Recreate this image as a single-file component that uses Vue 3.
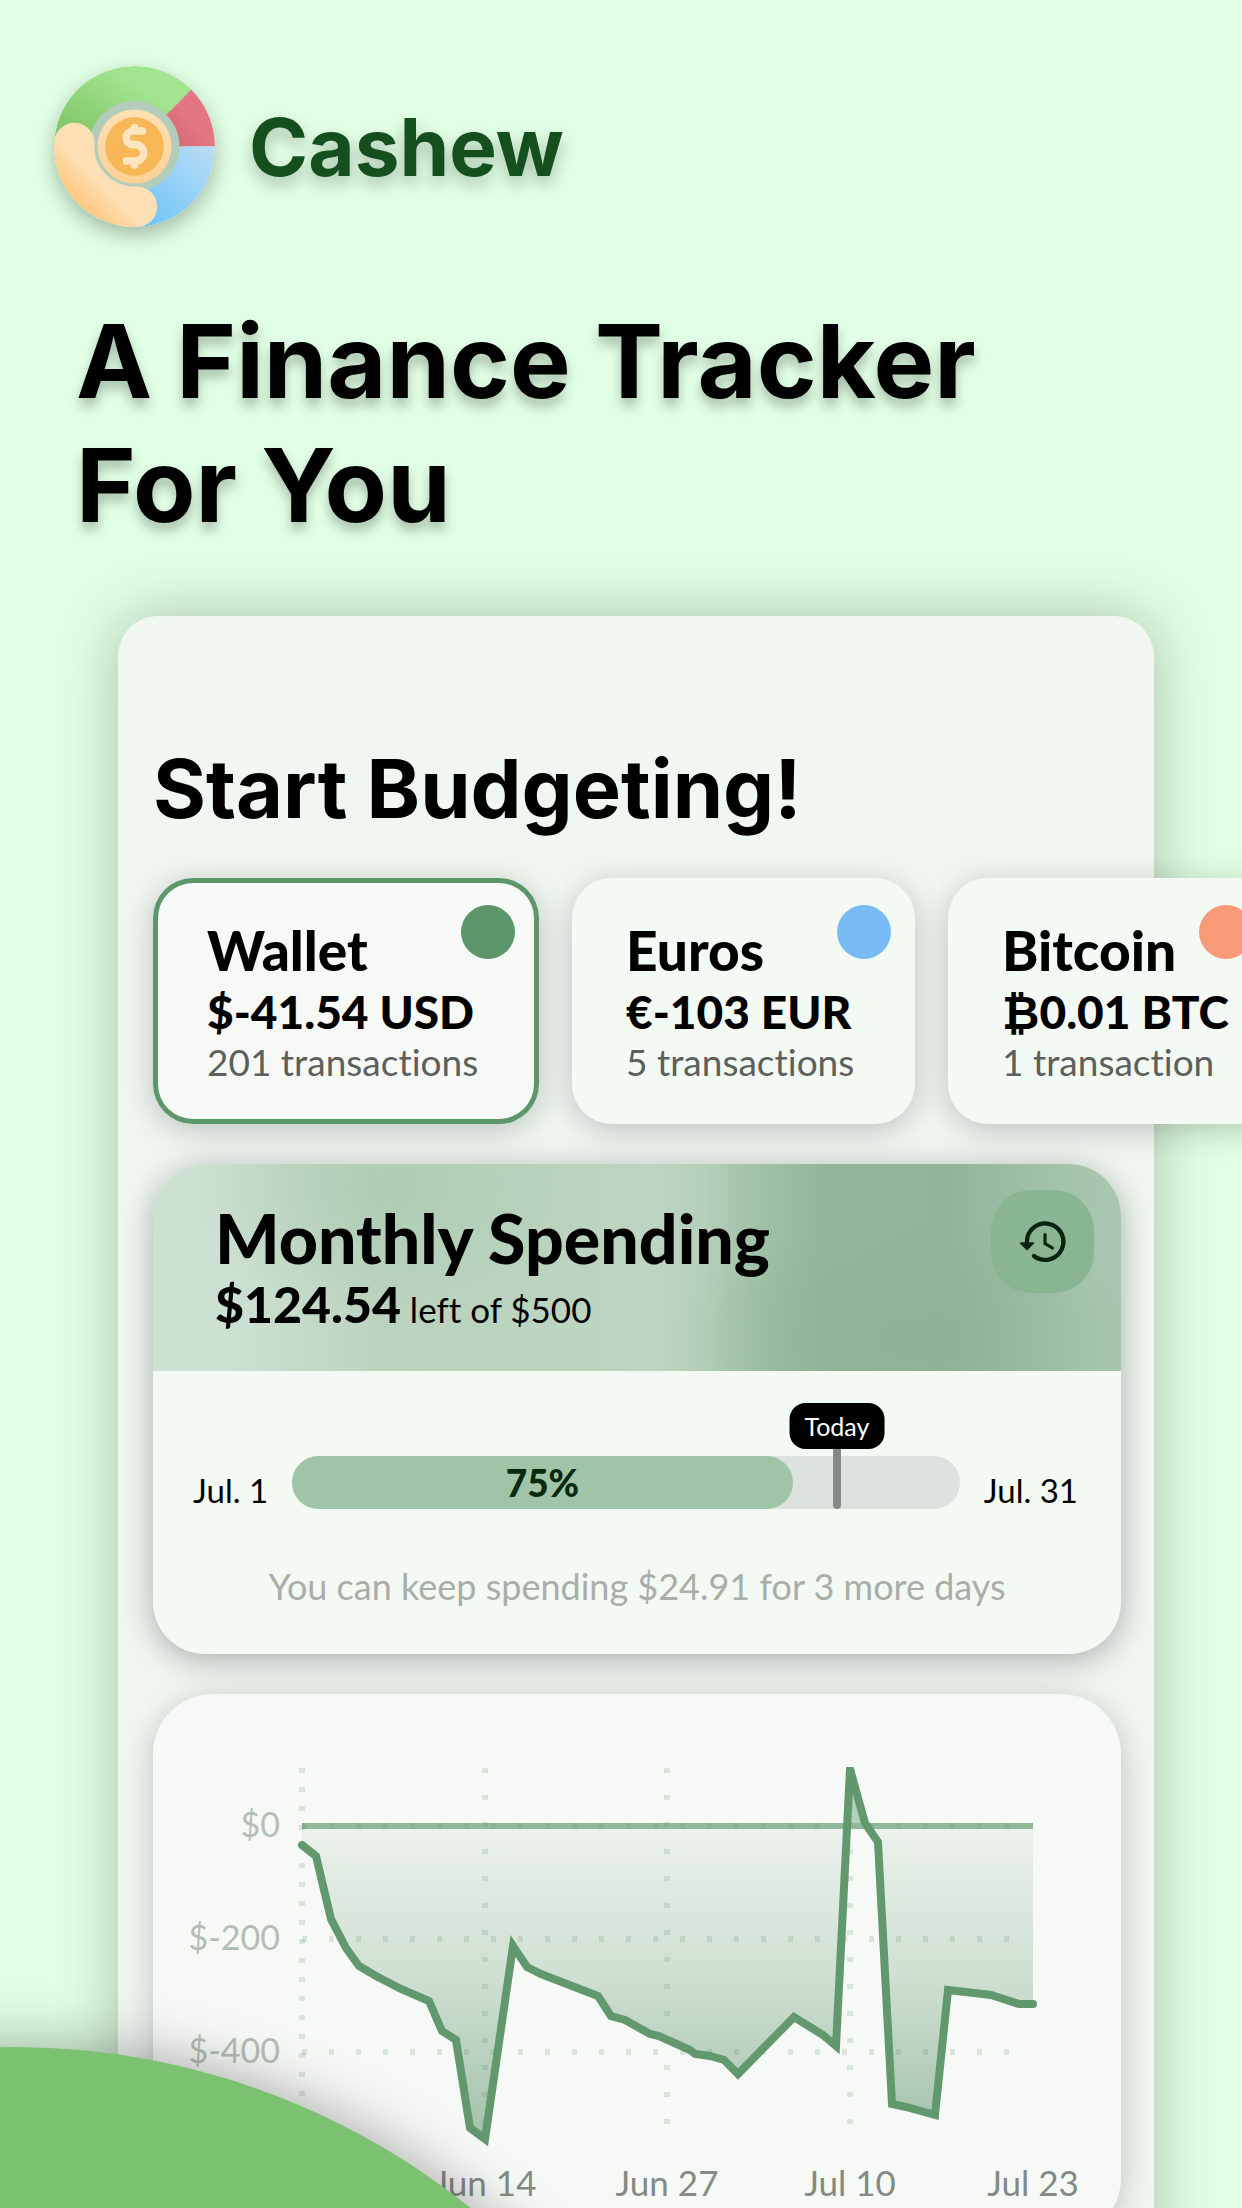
<script setup>
const wallets = [
  { name: 'Wallet', amount: '$-41.54 USD', count: '201 transactions', tone: 'green', active: true },
  { name: 'Euros', amount: '€-103 EUR', count: '5 transactions', tone: 'blue' },
  { name: 'Bitcoin', amount: '₿0.01 BTC', count: '1 transaction', tone: 'coral' }
]

const spentPercent = 75

const points = [
  [149, 151], [163, 162], [178, 225], [193, 254], [206, 272], [223, 282], [248, 295], [276, 307],
  [289, 337], [303, 346], [317, 434], [332, 445], [360, 252], [374, 273], [388, 280], [445, 302],
  [458, 322], [472, 326], [497, 340], [506, 342], [537, 356], [542, 360], [557, 362], [571, 366],
  [585, 380], [641, 323], [670, 341], [683, 352], [697, 75], [712, 129], [725, 148], [739, 410],
  [753, 413], [782, 421], [795, 296], [838, 301], [866, 310], [880, 310]
]
const line = points.map((p) => p.join(',')).join(' ')
const area = `149,132 ${line} 880,132`

const yLabels = [
  { text: '$0', y: 132 },
  { text: '$-200', y: 245 },
  { text: '$-400', y: 358 }
]
const xLabels = [
  { text: 'Jun 1', x: 149 },
  { text: 'Jun 14', x: 332 },
  { text: 'Jun 27', x: 514 },
  { text: 'Jul 10', x: 697 },
  { text: 'Jul 23', x: 880 }
]
</script>

<template>
  <main class="page">
    <header class="brand">
      <svg class="logo" viewBox="0 0 161 161" aria-hidden="true">
        <defs>
          <linearGradient id="lg-green" x1="0" y1="1" x2="1" y2="0">
            <stop offset="0.2" stop-color="#82c868" />
            <stop offset="0.7" stop-color="#a3e490" />
          </linearGradient>
          <linearGradient id="lg-red" x1="0" y1="1" x2="1" y2="0">
            <stop offset="0" stop-color="#d56472" />
            <stop offset="0.5" stop-color="#e27682" />
          </linearGradient>
          <linearGradient id="lg-blue" x1="0" y1="1" x2="1" y2="0">
            <stop offset="0" stop-color="#66c1fb" />
            <stop offset="1" stop-color="#bcdef4" />
          </linearGradient>
          <linearGradient id="lg-hand" gradientUnits="userSpaceOnUse" x1="22" y1="139" x2="46" y2="115">
            <stop offset="0" stop-color="#ffc77c" />
            <stop offset="1" stop-color="#ffdfb4" />
          </linearGradient>
          <linearGradient id="lg-coin" x1="0" y1="0" x2="0" y2="1">
            <stop offset="0" stop-color="#ffe0b6" />
            <stop offset="1" stop-color="#ffd194" />
          </linearGradient>
        </defs>
        <circle cx="80.500" cy="80.500" r="50" fill="#b4ccba" />
        <path d="M0 80.500 A80.500 80.500 0 0 1 137.400 23.600 L112.300 48.700 A45 45 0 0 0 38 64 L30 90 Z" fill="url(#lg-green)" />
        <path d="M137.400 23.600 A80.500 80.500 0 0 1 161 80.500 L125.500 80.500 A45 45 0 0 0 112.300 48.700 Z" fill="url(#lg-red)" />
        <path d="M161 80.500 A80.500 80.500 0 0 1 80.500 161 L90 124.500 A45 45 0 0 0 125.500 80.500 Z" fill="url(#lg-blue)" />
        <path d="M20.300 77 A60.300 60.300 0 0 0 83 140.700" fill="none" stroke="url(#lg-hand)" stroke-width="40.400" stroke-linecap="round" />
        <circle cx="80.500" cy="80.500" r="37" fill="url(#lg-coin)" />
        <circle cx="80.500" cy="80.500" r="29.300" fill="#f7b757" />
        <path d="M88.500 65 H79 a6.800 6.800 0 0 0 0 13.600 H81.500 a8.200 8.200 0 0 1 0 16.400 H72.500 M80.500 61.500 V65 M80.500 95 V99" fill="none" stroke="#ffe4c2" stroke-width="7.600" stroke-linecap="round" />
      </svg>
      <span class="brand-name">Cashew</span>
    </header>

    <h1 class="headline">A Finance Tracker<br />For You</h1>

    <section class="phone">
      <h2 class="greeting">Start Budgeting!</h2>

      <div class="wallets">
        <article v-for="w in wallets" :key="w.name" class="wallet" :class="[w.tone, { active: w.active }]">
          <h3>{{ w.name }}</h3>
          <p class="amount">{{ w.amount }}</p>
          <p class="count">{{ w.count }}</p>
        </article>
      </div>

      <article class="budget">
        <div class="budget-head">
          <div>
            <h3>Monthly Spending</h3>
            <p class="left"><strong>$124.54</strong> left of $500</p>
          </div>
          <button class="history" type="button" aria-label="Budget history">
            <svg viewBox="0 0 48 48" aria-hidden="true">
              <path d="M8 24 A18.200 18.200 0 1 1 15 38" />
              <path d="M26 16.500 V25.500 L33.500 30" class="hand" />
              <path d="M1.500 25 H14.500 L8 31.500 Z" class="arrow" />
            </svg>
          </button>
        </div>
        <div class="timeline">
          <span class="date">Jul. 1</span>
          <div class="track">
            <div class="fill" :style="{ width: spentPercent + '%' }">{{ spentPercent }}%</div>
            <div class="marker"><span class="today">Today</span></div>
          </div>
          <span class="date">Jul. 31</span>
        </div>
        <p class="hint">You can keep spending $24.91 for 3 more days</p>
      </article>

      <article class="chart">
        <svg viewBox="0 0 968 544" role="img" aria-label="Net spending, June to July">
          <defs>
            <linearGradient id="area-low" gradientUnits="userSpaceOnUse" x1="0" y1="132" x2="0" y2="445">
              <stop offset="0" stop-color="#5e966c" stop-opacity="0.070" />
              <stop offset="0.500" stop-color="#5e966c" stop-opacity="0.270" />
              <stop offset="1" stop-color="#5e966c" stop-opacity="0.560" />
            </linearGradient>
            <clipPath id="below"><rect x="0" y="132" width="968" height="400" /></clipPath>
            <clipPath id="above"><rect x="0" y="0" width="968" height="132" /></clipPath>
            <clipPath id="plot"><rect x="140" y="73" width="760" height="400" /></clipPath>
          </defs>
          <polygon :points="area" fill="url(#area-low)" clip-path="url(#below)" />
          <polygon :points="area" fill="#b3d0ba" clip-path="url(#above)" />
          <path class="base" d="M149 132 H880" />
          <path class="grid" d="M149 132 H870 M149 245 H870 M149 358 H870 M332 74 V432 M514 74 V432 M697 74 V432" />
          <path class="grid dense" d="M149 74 V432" />
          <polyline :points="line" class="line" clip-path="url(#plot)" />
          <text v-for="l in yLabels" :key="l.text" class="y" x="127" :y="l.y + 11">{{ l.text }}</text>
          <text v-for="l in xLabels" :key="l.text" class="x" :x="l.x" y="502">{{ l.text }}</text>
        </svg>
      </article>
    </section>

    <div class="hill" aria-hidden="true"></div>
  </main>
</template>

<style>
body {
  background: #e1ffe4;
}
</style>

<style scoped>
* {
  box-sizing: border-box;
}

h1,
h2,
h3,
p {
  margin: 0;
}

.page {
  position: relative;
  height: 100vh;
  overflow: hidden;
  padding-top: 66px;
  background: #e1ffe4;
  color: #000;
  font-family: Lato, "Open Sans", sans-serif;
  font-variant-ligatures: none;
}

.brand {
  display: flex;
  align-items: center;
  gap: 34px;
  padding-left: 54px;
}

.logo {
  width: 161px;
  height: 161px;
  border-radius: 50%;
  box-shadow: 0 8px 20px rgba(0, 0, 0, 0.28);
}

.brand-name {
  font: 700 80px/96px Inter, sans-serif;
  color: #164f1e;
  text-shadow: 0 8px 16px rgba(0, 0, 0, 0.25);
}

.headline {
  margin: 72px 0 0 76px;
  font: 700 102px/124px Inter, sans-serif;
  text-shadow: 0 8px 12px rgba(0, 0, 0, 0.25);
}

.phone {
  margin: 69px 88px 0 118px;
  padding: 123px 33px 60px 35px;
  border-radius: 40px 40px 0 0;
  background: #f0f7f1;
  box-shadow: 0 0 60px rgba(0, 0, 0, 0.25);
}

.greeting {
  font: 700 81px/100px Inter, sans-serif;
  white-space: nowrap;
}

.wallets {
  display: flex;
  gap: 33px;
  margin-top: 39px;
}

.wallet {
  position: relative;
  flex: none;
  width: 343px;
  padding: 40px 0 42px 54px;
  border-radius: 40px;
  background: #f3faf3;
  box-shadow: 0 6px 32px rgba(0, 0, 0, 0.22);
  white-space: nowrap;
}

.wallet.active {
  width: 386px;
  background: #f7f9f6;
  box-shadow: inset 0 0 0 5px #5e966c, 0 6px 32px rgba(0, 0, 0, 0.22);
}

.wallet.coral {
  width: 329px;
}

.wallet::after {
  content: "";
  position: absolute;
  top: 27px;
  right: 24px;
  width: 54px;
  height: 54px;
  border-radius: 50%;
  background: #5e966c;
}

.wallet.blue::after {
  background: #79bcf5;
}

.wallet.coral::after {
  background: #fb9a78;
}

.wallet h3 {
  font-size: 55px;
  font-weight: 900;
  line-height: 64px;
}

.amount {
  font-size: 46px;
  line-height: 60px;
  font-weight: 900;
}

.count {
  font-size: 37px;
  line-height: 40px;
  color: #5c605c;
}

.budget {
  margin-top: 40px;
  border-radius: 52px;
  overflow: hidden;
  background: #f3faf3;
  box-shadow: 0 6px 32px rgba(0, 0, 0, 0.3);
}

.budget-head {
  display: flex;
  justify-content: space-between;
  align-items: flex-start;
  height: 207px;
  padding: 26px 27px 0 62px;
  background:
    radial-gradient(ellipse 200px 130px at 24% 10%, rgba(168, 200, 174, 0.7), transparent),
    radial-gradient(ellipse 240px 120px at 78% 85%, rgba(134, 174, 144, 0.5), transparent),
    linear-gradient(90deg, #cde1d2 8%, #bad3bf 24%, #bad4bf 40%, #bdd5c2 52%, #b4cfba 57%, #9fc0a6 63%, #94b79c 69%, #92b59a 82%, #a9c7b0 98%);
}

.budget-head h3 {
  margin-top: 10px;
  font-size: 68px;
  font-weight: 900;
  line-height: 76px;
}

.left {
  font-size: 35px;
  line-height: 56px;
}

.left strong {
  font-size: 50px;
  font-weight: 900;
}

.history {
  display: flex;
  align-items: center;
  justify-content: center;
  width: 103px;
  height: 103px;
  padding: 0;
  border: 0;
  border-radius: 40px;
  background: #89b593;
}

.history svg {
  width: 48px;
  height: 48px;
  fill: none;
  stroke: #08230f;
  stroke-width: 4.300;
  stroke-linecap: round;
}

.history .hand {
  stroke-width: 3.200;
}

.history .arrow {
  fill: #08230f;
  stroke-width: 1.600;
  stroke-linejoin: round;
}

.timeline {
  display: flex;
  align-items: center;
  gap: 24px;
  margin-top: 83px;
  padding: 0 43px 0 40px;
}

.date {
  padding-top: 16px;
  font-size: 33px;
  line-height: 40px;
  white-space: nowrap;
}

.track {
  position: relative;
  flex: 1;
  height: 53px;
  border-radius: 27px;
  background: #dee2de;
}

.fill {
  height: 53px;
  border-radius: 27px;
  background: #a0c4a8;
  color: #082b10;
  font-size: 37px;
  font-weight: 900;
  line-height: 53px;
  text-align: center;
}

.marker {
  position: absolute;
  left: 81%;
  top: -53px;
  bottom: 0;
  width: 8px;
  border-radius: 4px;
  background: #868886;
}

.today {
  position: absolute;
  left: 50%;
  top: 0;
  transform: translateX(-50%);
  padding: 0 15px;
  border-radius: 16px;
  background: #000;
  color: #fff;
  font-size: 25px;
  line-height: 46px;
}

.hint {
  padding: 51px 0 43px;
  color: #aaaeaa;
  font-size: 36px;
  line-height: 50px;
  text-align: center;
}

.chart {
  margin-top: 40px;
  border-radius: 60px;
  background: #f7f9f6;
  box-shadow: 0 6px 32px rgba(0, 0, 0, 0.22);
}

.chart svg {
  display: block;
  width: 100%;
}

.chart text {
  font-size: 34px;
}

.chart .y {
  fill: #b3beb4;
  text-anchor: end;
}

.chart .x {
  fill: #838b85;
  font-size: 35px;
  text-anchor: middle;
}

.base {
  fill: none;
  stroke: #93b99b;
  stroke-width: 6;
}

.grid {
  fill: none;
  stroke: #5e966c;
  stroke-opacity: 0.2;
  stroke-width: 6;
  stroke-dasharray: 5 22;
}

.grid.dense {
  stroke-dasharray: 5 14;
}

.line {
  fill: none;
  stroke: #61986e;
  stroke-width: 8;
  stroke-linecap: round;
  stroke-miterlimit: 10;
}

.hill {
  position: absolute;
  left: -714px;
  bottom: -1295px;
  width: 1456px;
  height: 1456px;
  border-radius: 50%;
  background: #7ac170;
  box-shadow: 0 0 60px rgba(0, 0, 0, 0.35);
}
</style>
